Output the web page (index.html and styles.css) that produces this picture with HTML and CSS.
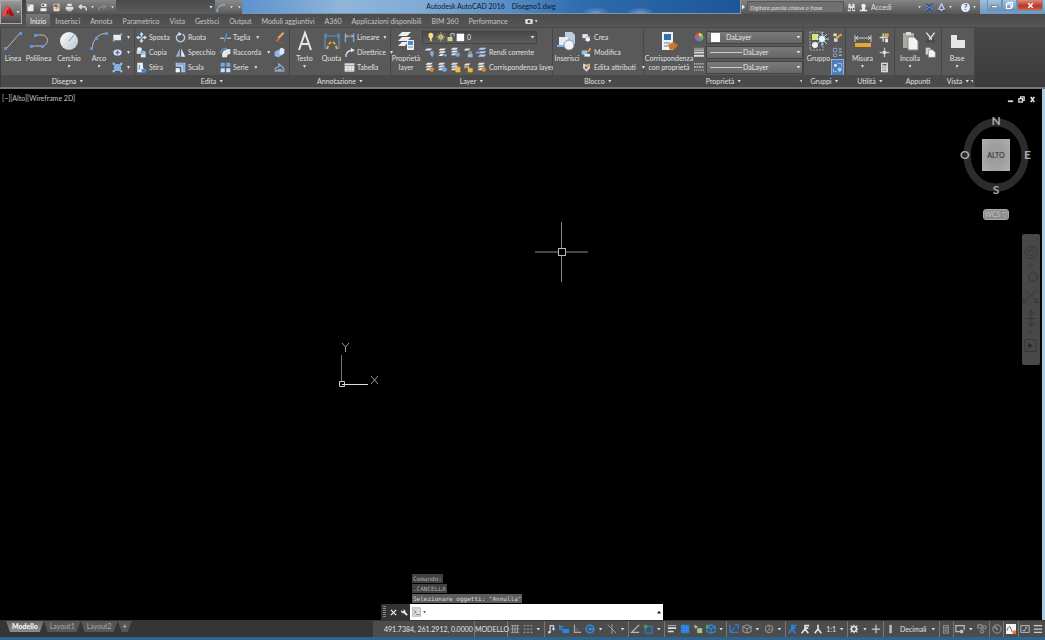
FILE: index.html
```html
<!DOCTYPE html>
<html lang="it">
<head>
<meta charset="utf-8">
<title>Autodesk AutoCAD 2016 - Disegno1.dwg</title>
<link rel="stylesheet" href="styles.css">
</head>
<body>
<svg class="defs" aria-hidden="true">
  <defs>
    <linearGradient id="ball" x1="0" y1="0" x2="1" y2="1"><stop offset="0" stop-color="#fff"/><stop offset="1" stop-color="#b9c3cf"/></linearGradient>
    <symbol id="i-rect" viewBox="0 0 16 16"><rect x="2" y="4" width="11" height="8" fill="#e8ebee"/><rect x="1" y="11" width="3" height="3" fill="#7fb1e8"/><rect x="12" y="2" width="3" height="3" fill="#7fb1e8"/></symbol>
    <symbol id="i-ellipse" viewBox="0 0 16 16"><ellipse cx="8" cy="8" rx="6" ry="4.500" fill="#dde4ee"/><path d="M8 5v6M5 8h6" stroke="#3e78c8" stroke-width="2"/></symbol>
    <symbol id="i-hatch" viewBox="0 0 16 16"><rect x="3" y="3" width="10" height="10" fill="#6ba3e0"/><path d="M3 9l6-6M4 13l9-9M9 13l4-4" stroke="#dcecff"/><path d="M1 1h3v3H1zM12 1h3v3h-3zM1 12h3v3H1zM12 12h3v3h-3z" fill="#aacdf4"/></symbol>
    <symbol id="i-move" viewBox="0 0 16 16"><path d="M8 0l3 4H9v3h3V5l4 3-4 3V9H9v3h2l-3 4-3-4h2V9H4v2L0 8l4-3v2h3V4H5z" fill="#d5e6f8"/><path d="M6 6h4v4H6z" fill="#6c9dd4"/></symbol>
    <symbol id="i-rotate" viewBox="0 0 16 16"><path d="M5 3a6 6 0 1 0 6 0" fill="none" stroke="#b5cbe4" stroke-width="2"/><path d="M5 0v6l5-3z" fill="#dbe9f9"/></symbol>
    <symbol id="i-copy" viewBox="0 0 16 16"><circle cx="5" cy="4" r="3.500" fill="#f1f3f5"/><path d="M1 5h6v5H1z" fill="#cfd9e4"/><circle cx="11" cy="9" r="3.500" fill="#8cc4ed"/><path d="M7 11h7v4H7z" fill="#d9ebfa"/></symbol>
    <symbol id="i-mirror" viewBox="0 0 16 16"><path d="M7 2v12H1z" fill="#8dafd7"/><path d="M9 2v12h6z" fill="#e6eaf0"/></symbol>
    <symbol id="i-stretch" viewBox="0 0 16 16"><path d="M2 1h8v6l3 8H2z" fill="#f1f4f7"/><path d="M8 10h7v5H8z" fill="#3f8be0"/><path d="M5 4v7" stroke="#69a3df" stroke-width="2"/></symbol>
    <symbol id="i-scale" viewBox="0 0 16 16"><path d="M1 1h14v14H9V7H1z" fill="#a9c7e9"/><path d="M1 9h6v6H1z" fill="#f2f6fa"/><path d="M3 3h10v10" stroke="#4f80bd" fill="none"/></symbol>
    <symbol id="i-trim" viewBox="0 0 16 16"><path d="M0 9h6m4 0h6" stroke="#a8b5c5" stroke-width="2"/><path d="M6 14L10 2" stroke="#5c99dc" stroke-width="2"/></symbol>
    <symbol id="i-fillet" viewBox="0 0 16 16"><path d="M3 15V10q1-7 12-7v7q-5 0-5 5z" fill="#e3e8ee"/><path d="M1 9q1-7 9-7" stroke="#5795da" stroke-width="2" fill="none"/></symbol>
    <symbol id="i-array" viewBox="0 0 16 16"><path d="M1 1h6v6H1zM9 1h6v6H9z" fill="#6fa9e5"/><path d="M1 9h6v6H1zM9 9h6v6H9z" fill="#c9dff6"/></symbol>
    <symbol id="i-erase" viewBox="0 0 16 16"><path d="M14 1L6 9" stroke="#e3a95f" stroke-width="3"/><path d="M7 8l2 2-4 4-3-1z" fill="#d4604b"/><path d="M6 15h9" stroke="#8d5a3a"/></symbol>
    <symbol id="i-explode" viewBox="0 0 16 16"><path d="M1 7l5-3 4 3v6l-4 2-5-2z" fill="#8db8e9"/><path d="M8 3l3-2 4 2v6l-4 3-3-2z" fill="#dceafa"/></symbol>
    <symbol id="i-offset" viewBox="0 0 16 16"><path d="M2 13V9l5-2V3l7 6v4z" fill="none" stroke="#89a7cb" stroke-width="2"/><path d="M6 13V11h5" stroke="#d9e5f3" fill="none"/></symbol>
    <symbol id="i-linear" viewBox="0 0 16 16"><path d="M2 2v13M14 2v13" stroke="#7aa9df" stroke-width="2"/><path d="M3 6h10M5 4L3 6l2 2M11 4l2 2-2 2" stroke="#c6d4e4" fill="none"/></symbol>
    <symbol id="i-leader" viewBox="0 0 16 16"><path d="M3 14q0-9 8-9h4" stroke="#dce1e7" stroke-width="2" fill="none"/><path d="M10 1l4 3-4 4z" fill="#f1f1f1"/><path d="M1 11h4l-2 4z" fill="#86b6ea"/></symbol>
    <symbol id="i-table" viewBox="0 0 16 16"><rect x="1" y="2" width="14" height="12" fill="#f2f2f2"/><path d="M1 5h14" stroke="#87a3c0" stroke-width="2"/><path d="M1 9h14M1 12h14M6 5v9M11 5v9" stroke="#bbb"/></symbol>
    <symbol id="i-layer" viewBox="0 0 16 16"><path d="M5 2h8l-3 3H2zM5 6h8l-3 3H2zM5 10h5l-2 3H2z" fill="#e5e8ec"/><circle cx="12" cy="12" r="2" fill="#74a9e4"/></symbol>
    <symbol id="i-layer-b" viewBox="0 0 16 16"><path d="M4 1h8L9 4H1zM4 5h8L9 8H1zM4 9h6l-2 3H1z" fill="#dfe4e9"/><circle cx="11" cy="11" r="3.500" fill="#6ca8ea"/></symbol>
    <symbol id="i-layer-a" viewBox="0 0 16 16"><path d="M4 2h8L9 5H1z" fill="#e3e6ea"/><path d="M9 6h5v5l-2 4-3-4z" fill="#7fb0e5"/></symbol>
    <symbol id="i-layer-c" viewBox="0 0 16 16"><path d="M4 2h7L8 5H1z" fill="#e3e6ea"/><path d="M7 10h7v5H7z" fill="#8fb8e3"/><path d="M9 10V7h3v3" stroke="#ddd" fill="none"/></symbol>
    <symbol id="i-layer-m" viewBox="0 0 16 16"><path d="M6 1h9l-3 3H3zM6 6h9l-3 3H3zM6 11h9l-3 3H3z" fill="#b7c9f0"/><path d="M0 8h6" stroke="#6f9be6" stroke-width="3"/></symbol>
    <symbol id="i-layer-y" viewBox="0 0 16 16"><path d="M4 1h8L9 4H1zM4 5h8L9 8H1zM4 9h6l-2 3H1z" fill="#dfe4e9"/><path d="M8 7h7v8H8z" fill="#efc044"/></symbol>
    <symbol id="i-layer-u" viewBox="0 0 16 16"><path d="M4 2h7L8 5H1z" fill="#e3e6ea"/><path d="M7 9h7v6H7z" fill="#f0b93c"/><path d="M3 9V7h5v3" stroke="#e7c368" stroke-width="2" fill="none"/></symbol>
    <symbol id="i-layer-r" viewBox="0 0 16 16"><path d="M5 1h8l-3 3H2zM5 5h8l-3 3H2zM5 9h8l-3 3H2z" fill="#e8e8e8"/><path d="M7 12l5-5 3 4-3 4z" fill="#e08a37"/></symbol>
    <symbol id="i-block" viewBox="0 0 16 16"><path d="M2 3h8v6H2z" fill="#e1e5ea"/><path d="M8 5l5 2v6H6z" fill="#a4c3e5"/><circle cx="10" cy="11" r="3" fill="#f4f5f6"/></symbol>
    <symbol id="i-block-e" viewBox="0 0 16 16"><path d="M1 5h8v6H1z" fill="#8cc7ec"/><path d="M5 10h8v4H5z" fill="#e7edf2"/><path d="M9 6l4-5 2 2-4 5z" fill="#eba34a"/></symbol>
    <symbol id="i-attr" viewBox="0 0 16 16"><path d="M3 2l5 2 5-2v7l-5 5-5-5z" fill="#e0d6c2"/><path d="M5 9l6-6 2 2-6 6z" fill="#e49b38"/><path d="M6 6h3v4H6z" fill="#647b94"/></symbol>
    <symbol id="i-wheel" viewBox="0 0 16 16"><path d="M8 8V1a7 7 0 0 1 6 4z" fill="#f1cd45"/><path d="M8 8l6-3a7 7 0 0 1-1 8z" fill="#7cb955"/><path d="M8 8l5 5a7 7 0 0 1-9 0z" fill="#5788cf"/><path d="M8 8l-4 5A7 7 0 0 1 2 5z" fill="#b25abd"/><path d="M8 8L2 5a7 7 0 0 1 6-4z" fill="#de5a48"/></symbol>
    <symbol id="i-weight" viewBox="0 0 16 16"><path d="M0 2h16" stroke="#ccc"/><path d="M0 5h16" stroke="#ccc" stroke-width="2"/><path d="M0 9h16M0 14h16" stroke="#ddd" stroke-width="3"/></symbol>
    <symbol id="i-ltype" viewBox="0 0 16 16"><path d="M0 3h16" stroke="#ccc" stroke-width="2" stroke-dasharray="2 1"/><path d="M0 8h16" stroke="#aaa" stroke-width="3" stroke-dasharray="3 1"/><path d="M0 13h16" stroke="#ccc" stroke-width="3" stroke-dasharray="1 2"/></symbol>
    <symbol id="i-gedit" viewBox="0 0 16 16"><path d="M2 2h5v4H2zM3 9h5v5H3z" fill="#dfdcc9"/><path d="M5 8l8-6 2 2-8 7z" fill="#e7a43b"/></symbol>
    <symbol id="i-gsel" viewBox="0 0 16 16"><path d="M2 2h5v5H2zM2 10h5v4H2z" fill="none" stroke="#9fb9d6"/><path d="M10 3h4M10 7h4M10 12h4" stroke="#8fb8e6" stroke-width="2"/></symbol>
    <symbol id="i-gon" viewBox="0 0 16 16"><path d="M3 3h4v4H3z" fill="#cde2f8"/><circle cx="11" cy="11" r="3" fill="#a8cef5"/><path d="M8 2h6v5M2 9v5h5" stroke="#b9d7f6" fill="none"/></symbol>
    <symbol id="i-qsel" viewBox="0 0 16 16"><path d="M6 2v12M1 8h12" stroke="#d6d6d6" stroke-width="2"/><path d="M8 2h6v5H8z" fill="#e7a446"/><path d="M9 10h4v5H9z" fill="#efefef"/></symbol>
    <symbol id="i-point" viewBox="0 0 16 16"><path d="M8 1v14M1 8h14" stroke="#bdbdbd" stroke-width="2"/><circle cx="8" cy="8" r="2.500" fill="#e6e6e6"/></symbol>
    <symbol id="i-calc" viewBox="0 0 16 16"><rect x="3" y="1" width="10" height="14" fill="#ddd"/><path d="M5 3h6v2H5z" fill="#555"/><path d="M5 8h6M5 12h6" stroke="#666" stroke-width="2" stroke-dasharray="1 1"/></symbol>
    <symbol id="i-cut" viewBox="0 0 16 16"><path d="M2 1l8 10M14 1L6 11" stroke="#e8e8e8" stroke-width="2"/><circle cx="4" cy="13" r="2" fill="none" stroke="#333"/><circle cx="12" cy="13" r="2" fill="none" stroke="#333"/></symbol>
    <symbol id="i-pages" viewBox="0 0 16 16"><path d="M1 1h7v10H1z" fill="#d4d4d4"/><path d="M5 4h6l4 4v7H5z" fill="#f4f4f4" stroke="#888"/></symbol>

    <symbol id="s-grid" viewBox="0 0 12 12"><path d="M1 2h10M1 6h10M1 10h10M3 1v10M6 1v10M9 1v10" stroke="#aaa"/></symbol>
    <symbol id="s-dots" viewBox="0 0 12 12"><path d="M1 2h10M1 6h10M1 10h10" stroke="#999" stroke-width="1.500" stroke-dasharray="2 2"/></symbol>
    <symbol id="s-infer" viewBox="0 0 12 12"><path d="M5 10V2h4v3" stroke="#ccc" stroke-width="1.500" fill="none"/><circle cx="4" cy="10" r="1.500" fill="#ddd"/><circle cx="9" cy="6" r="1.500" fill="#ddd"/></symbol>
    <symbol id="s-dyn" viewBox="0 0 12 12"><path d="M1 1v5h3M2 3h3" stroke="#2f8eed" stroke-width="1.500" fill="none"/><rect x="4" y="6" width="8" height="5" fill="#2387ed"/></symbol>
    <symbol id="s-ortho" viewBox="0 0 12 12"><path d="M3 1v9h8" stroke="#aaa" stroke-width="1.500" fill="none"/><path d="M3 6h4v4" stroke="#777" fill="none"/></symbol>
    <symbol id="s-polar" viewBox="0 0 12 12"><circle cx="6" cy="6" r="4.500" stroke="#2e88e4" stroke-width="2" fill="none"/><circle cx="6" cy="6" r="2" fill="#2e88e4"/><path d="M6 6h5" stroke="#55a5f2"/></symbol>
    <symbol id="s-iso" viewBox="0 0 12 12"><path d="M1 1l10 10M6 0v12" stroke="#aaa" fill="none"/></symbol>
    <symbol id="s-track" viewBox="0 0 12 12"><path d="M11 1L2 10h9" stroke="#bbb" stroke-width="1.500" fill="none"/></symbol>
    <symbol id="s-osnap" viewBox="0 0 12 12"><rect x="3" y="3" width="8" height="8" stroke="#247ddc" stroke-width="1.500" fill="none"/><rect x="1" y="1" width="4" height="4" fill="#4d9c4b"/></symbol>
    <symbol id="s-lines" viewBox="0 0 12 12"><path d="M1 2h10" stroke="#ccc"/><path d="M1 5h10M1 9h7" stroke="#ddd" stroke-width="2"/></symbol>
    <symbol id="s-trans" viewBox="0 0 12 12"><rect x="1" y="1" width="10" height="10" fill="#287fdd"/><path d="M1 4h10M1 8h10M4 1v10M8 1v10" stroke="#3a8ce2"/></symbol>
    <symbol id="s-cycle" viewBox="0 0 12 12"><rect x="5" y="5" width="6" height="6" fill="#a9c47c"/><path d="M1 1l5 2-3 3z" fill="#bbb"/></symbol>
    <symbol id="s-cube" viewBox="0 0 12 12"><path d="M1 3l5-2 5 2v6l-5 2-5-2zM1 3l5 3 5-3M6 6v5" stroke="#aaa" fill="none"/></symbol>
    <symbol id="s-bcube" viewBox="0 0 12 12"><path d="M1 3l5-2 5 2v6l-5 2-5-2zM1 3l5 3 5-3M6 6v5" stroke="#2789e8" stroke-width="1.500" fill="none"/><rect x="0" y="1" width="4" height="4" fill="#4ba067"/></symbol>
    <symbol id="s-ucs" viewBox="0 0 12 12"><path d="M1 1v9h10M1 10l6-6M7 1h4v5" stroke="#2780db" stroke-width="1.500" fill="none"/></symbol>
    <symbol id="s-gizmo" viewBox="0 0 12 12"><circle cx="6" cy="6" r="4.500" stroke="#aaa" fill="none"/><path d="M6 2v5h4" stroke="#ca7a58" fill="none"/><path d="M6 7l-3 2" stroke="#7bab71"/></symbol>
    <symbol id="s-man" viewBox="0 0 12 12"><path d="M6 1v5L2 11M6 6l4 5" stroke="currentColor" stroke-width="2" fill="none"/></symbol>
    <symbol id="s-man-x" viewBox="0 0 12 12"><path d="M6 1v5L2 11M6 6l4 5M7 2h4M6 5h4" stroke="currentColor" stroke-width="2" fill="none"/></symbol>
    <symbol id="s-gear" viewBox="0 0 12 12"><circle cx="6" cy="6" r="3" stroke="#ddd" stroke-width="2" fill="none"/><path d="M6 1v2M6 9v2M1 6h2M9 6h2M2 2l2 2M8 8l2 2M2 10l2-2M8 4l2-2" stroke="#ddd" stroke-width="1.500"/></symbol>
    <symbol id="s-plus" viewBox="0 0 12 12"><path d="M6 1v10M1 6h10" stroke="#ccc" stroke-width="1.500"/></symbol>
    <symbol id="s-bar" viewBox="0 0 12 12"><rect x="4" y="1" width="3" height="10" fill="#bbb"/></symbol>
    <symbol id="s-prop" viewBox="0 0 12 12"><rect x="3" y="2" width="6" height="9" fill="none" stroke="#999"/><path d="M3 4h6M5 5v5M7 5v5" stroke="#999"/></symbol>
    <symbol id="s-mon" viewBox="0 0 12 12"><path d="M6 9H1V2h10v5" fill="none" stroke="#bbb" stroke-width="1.500"/><rect x="6" y="7" width="4" height="4" fill="#bbb"/></symbol>
    <symbol id="s-isol" viewBox="0 0 12 12"><path d="M1 1h5v4H1z" stroke="#aaa" fill="none"/><circle cx="9" cy="4" r="2" fill="none" stroke="#aaa"/><circle cx="6" cy="9" r="2" fill="none" stroke="#aaa"/></symbol>
    <symbol id="s-perf" viewBox="0 0 12 12"><circle cx="6" cy="6" r="5" stroke="#aaa" fill="none"/><path d="M3 3l4 4" stroke="#aaa" stroke-width="1.500"/></symbol>
    <symbol id="s-hw" viewBox="0 0 12 12"><rect width="12" height="12" fill="#f5f5f5"/><path d="M1 8q3-9 5-2t5 2" stroke="#555" fill="none"/><path d="M8 8h4v4H8z" fill="#e77b2e"/></symbol>
    <symbol id="s-full" viewBox="0 0 12 12"><rect x="1" y="2" width="10" height="8" stroke="#ccc" fill="none"/><path d="M3 8h3V6M9 4H7v2" stroke="#ccc" fill="none"/></symbol>
    <symbol id="s-menu" viewBox="0 0 12 12"><path d="M1 2h10M1 6h10M1 10h10" stroke="#ccc" stroke-width="1.500"/></symbol>
  </defs>
</svg>

<div class="app">
  <header class="top">
    <button class="logo" aria-label="Menu applicazione">
      <svg viewBox="0 0 24 24"><path d="M1 19L8 3h5l8 14-5 2-3-3H8l-2 3z" fill="#c81f26"/><path d="M8 3h5l-2 7-5 9H1z" fill="#ec4a45"/><path d="M10 8l2 5H9z" fill="#6b0d12"/><path d="M14 6l7 11-5 2-3-5z" fill="#9f141b"/></svg>
      <i class="caret"></i>
    </button>
    <div class="titlebar">
      <div class="quick">
        <button aria-label="Nuovo"><svg viewBox="0 0 12 12"><path d="M2 2h8v9H2z" fill="#eee"/><path d="M2 2h3v3H2z" fill="#aaa"/></svg></button>
        <button aria-label="Salva"><svg viewBox="0 0 12 12"><path d="M3 1h7v4H3zM2 7h8v4H2z" fill="#eee"/><path d="M4 2h3v2H4z" fill="#555"/></svg></button>
        <button aria-label="Salva con nome"><svg viewBox="0 0 12 12"><path d="M2 1h8v10H2z" fill="#ddd"/><path d="M4 7l5-5 2 2-5 5z" fill="#e69b3e"/><path d="M3 2h4v3H3z" fill="#555"/></svg></button>
        <button aria-label="Stampa"><svg viewBox="0 0 12 12"><path d="M3 1h6v3H3zM1 5h10v4H1z" fill="#e4e4e4"/><path d="M3 8h6v3H3z" fill="#aac8e5"/></svg></button>
        <button aria-label="Annulla"><svg viewBox="0 0 12 12"><path d="M3 5h5q3 0 3 5" stroke="#ddd" stroke-width="2" fill="none"/><path d="M0 5l5-4v8z" fill="#ddd"/></svg></button>
        <i class="caret"></i>
        <button aria-label="Ripeti"><svg viewBox="0 0 12 12"><path d="M9 5H4Q1 5 1 10" stroke="#888" stroke-width="2" fill="none"/><path d="M12 5L7 1v8z" fill="#888"/></svg></button>
        <i class="caret"></i>
      </div>
      <div class="workspace"><i class="caret"></i></div>
      <div class="quick-end">
        <svg viewBox="0 0 12 12"><path d="M1 11Q2 3 11 2" stroke="#ccc" fill="none"/><path d="M0 9h3v3H0zM9 1h3v3H9z" fill="#6da2df"/></svg>
        <i class="caret"></i><i class="caret"></i>
      </div>
      <h1 class="doc-title"><span>Autodesk AutoCAD 2016</span><span>Disegno1.dwg</span></h1>
      <div class="infocenter">
        <i class="play"></i>
        <input class="search" type="text" aria-label="Cerca" placeholder="Digitare parola chiave o frase">
        <svg class="ic" viewBox="0 0 12 12"><path d="M1 11L2 1h3v10zM7 11V1h3l1 10zM4 4h4v3H4z" fill="#ddd"/><path d="M2 8h2M8 8h2" stroke="#444" stroke-width="2"/></svg>
        <svg class="ic" viewBox="0 0 12 12"><circle cx="6" cy="4" r="3" fill="#eee"/><path d="M1 11h10v-2H8V6H4v3H1z" fill="#eee"/></svg>
        <button class="signin">Accedi <i class="caret"></i></button>
        <svg class="ic wide" viewBox="0 0 12 12"><path d="M0 1h4l2 3 2-3h4L9 6l3 5H8L6 8l-2 3H0l3-5z" fill="#284a93"/><path d="M1 2l4 4-4 4M11 2L7 6l4 4" stroke="#b9ccf1" fill="none"/></svg>
        <svg class="ic" viewBox="0 0 12 12"><path d="M6 1L2 9h8z" fill="none" stroke="#b9c9ed" stroke-width="2"/><path d="M0 9h4v2H0zM8 9h4v2H8z" fill="#324d8e"/></svg>
        <i class="caret"></i>
        <button class="help" aria-label="Guida">?</button>
        <i class="caret"></i>
      </div>
      <div class="window-buttons">
        <button aria-label="Riduci a icona"><svg viewBox="0 0 12 12"><path d="M2 6h8v3H2z" fill="#fff" stroke="#667"/></svg></button>
        <button aria-label="Ripristina"><svg viewBox="0 0 12 12"><path d="M2 4h6v6H2zM4 4V2h6v6H8" fill="none" stroke="#fff" stroke-width="1.500"/></svg></button>
        <button class="close" aria-label="Chiudi"><svg viewBox="0 0 12 12"><path d="M3 3l6 6M9 3l-6 6" stroke="#fff" stroke-width="2"/></svg></button>
      </div>
    </div>
    <nav class="tabs">
      <button class="on">Inizio</button><button>Inserisci</button><button>Annota</button><button>Parametrico</button><button>Vista</button><button>Gestisci</button><button>Output</button><button>Moduli aggiuntivi</button><button>A360</button><button>Applicazioni disponibili</button><button>BIM 360</button><button>Performance</button>
      <button class="tab-min" aria-label="Riduci a schede"><svg viewBox="0 0 12 8"><rect width="12" height="8" rx="2" fill="#ddd"/><rect x="4" y="2" width="4" height="4" fill="#444"/></svg><i class="caret"></i></button>
    </nav>
  </header>

  <div class="ribbon">
    <section class="panel disegna">
      <div class="body">
        <button class="big"><svg viewBox="0 0 20 20"><path d="M3 18L17 2" stroke="#b9b9b9"/><path d="M1 16h3v3H1zM16 1h3v3h-3z" fill="#5f96dc"/></svg><span>Linea</span></button>
        <button class="big"><svg viewBox="0 0 20 20"><path d="M2 15h11a5 5 0 0 0 0-11H6" stroke="#b9b9b9" fill="none"/><path d="M1 14h3v3H1zM12 14h3v3h-3zM5 3h3v3H5z" fill="#5f96dc"/></svg><span>Polilinea</span></button>
        <button class="big"><svg viewBox="0 0 20 20"><circle cx="10" cy="10" r="9" fill="url(#ball)"/><path d="M10 10l5-6" stroke="#5d93d3"/></svg><span>Cerchio</span><i class="caret"></i></button>
        <button class="big"><svg viewBox="0 0 20 20"><path d="M3 18Q4 3 18 2" stroke="#b9b9b9" fill="none"/><path d="M1 16h3v3H1zM6 6h3v3H6zM16 1h3v3h-3z" fill="#5f96dc"/></svg><span>Arco</span><i class="caret"></i></button>
        <div class="col">
          <button class="row" aria-label="Rettangolo"><svg><use href="#i-rect"/></svg><i class="caret"></i></button>
          <button class="row" aria-label="Ellisse"><svg><use href="#i-ellipse"/></svg><i class="caret"></i></button>
          <button class="row" aria-label="Tratteggio"><svg><use href="#i-hatch"/></svg><i class="caret"></i></button>
        </div>
      </div>
      <footer>Disegna<i class="caret"></i></footer>
    </section>

    <section class="panel edita">
      <div class="body">
        <div class="col">
          <button class="row"><svg><use href="#i-move"/></svg>Sposta</button>
          <button class="row"><svg><use href="#i-copy"/></svg>Copia</button>
          <button class="row"><svg><use href="#i-stretch"/></svg>Stira</button>
        </div>
        <div class="col">
          <button class="row"><svg><use href="#i-rotate"/></svg>Ruota</button>
          <button class="row"><svg><use href="#i-mirror"/></svg>Specchio</button>
          <button class="row"><svg><use href="#i-scale"/></svg>Scala</button>
        </div>
        <div class="col">
          <button class="row"><svg><use href="#i-trim"/></svg>Taglia<i class="caret"></i></button>
          <button class="row"><svg><use href="#i-fillet"/></svg>Raccorda<i class="caret"></i></button>
          <button class="row"><svg><use href="#i-array"/></svg>Serie<i class="caret"></i></button>
        </div>
        <div class="col">
          <button class="row" aria-label="Cancella"><svg><use href="#i-erase"/></svg></button>
          <button class="row" aria-label="Esplodi"><svg><use href="#i-explode"/></svg></button>
          <button class="row" aria-label="Offset"><svg><use href="#i-offset"/></svg></button>
        </div>
      </div>
      <footer>Edita<i class="caret"></i></footer>
    </section>

    <section class="panel annotazione">
      <div class="body">
        <button class="big"><svg viewBox="0 0 20 20"><path d="M4 19L10 2l6 17M6 13h8" stroke="#e6e6e6" stroke-width="2" fill="none"/></svg><span>Testo</span><i class="caret"></i></button>
        <button class="big"><svg viewBox="0 0 20 20"><path d="M3 2v16M17 2v16" stroke="#6d9bd3"/><path d="M3 5h14M5 3L3 5l2 2M15 3l2 2-2 2" stroke="#5793dc" fill="none"/><path d="M5 18q2-7 5-7t5 7" stroke="#e4ae3c" stroke-width="2" stroke-dasharray="3 2" fill="none"/></svg><span>Quota</span></button>
        <div class="col">
          <button class="row"><svg><use href="#i-linear"/></svg>Lineare<i class="caret"></i></button>
          <button class="row"><svg><use href="#i-leader"/></svg>Direttrice<i class="caret"></i></button>
          <button class="row"><svg><use href="#i-table"/></svg>Tabella</button>
        </div>
      </div>
      <footer>Annotazione<i class="caret"></i></footer>
    </section>

    <section class="panel layer">
      <div class="body">
        <button class="big"><svg viewBox="0 0 20 20"><path d="M6 1h9l-4 4H2zM6 6h9l-4 4H2zM6 11h6l-3 4H2z" fill="#eceef0"/><path d="M11 9h7v10h-7z" fill="#eaf2fa"/><path d="M12 10h5v4h-5z" fill="#4c8bcf"/><path d="M12 16h5" stroke="#888"/></svg><span>Proprietà<br>layer</span></button>
        <div class="col">
          <label class="combo">
            <svg class="state" viewBox="0 0 48 14"><path d="M4 5a3 3 0 1 1 6 0q0 2-2 4v3H6V9Q4 7 4 5z" fill="#f2df86"/><circle cx="19" cy="7" r="3" fill="#f4dc87"/><path d="M19 1v12M13 7h12M15 3l8 8M23 3l-8 8" stroke="#b5a371"/><path d="M27 7h6v5h-6z" fill="#d9cf8c"/><path d="M31 7V3h4v3" stroke="#ddd" fill="none"/><path d="M38 3h9v9h-9z" fill="#fff"/></svg>
            <select aria-label="Layer"><option>0</option></select>
          </label>
          <div class="icons">
            <button class="row" aria-label="Disattiva"><svg><use href="#i-layer-a"/></svg></button>
            <button class="row" aria-label="Isola"><svg><use href="#i-layer"/></svg></button>
            <button class="row" aria-label="Congela"><svg><use href="#i-layer-b"/></svg></button>
            <button class="row" aria-label="Blocca"><svg><use href="#i-layer-c"/></svg></button>
            <button class="row"><svg><use href="#i-layer-m"/></svg>Rendi corrente</button>
          </div>
          <div class="icons">
            <button class="row" aria-label="Attiva tutti"><svg><use href="#i-layer-r"/></svg></button>
            <button class="row" aria-label="Annulla isolamento"><svg><use href="#i-layer-b"/></svg></button>
            <button class="row" aria-label="Scongela tutti"><svg><use href="#i-layer-y"/></svg></button>
            <button class="row" aria-label="Sblocca"><svg><use href="#i-layer-u"/></svg></button>
            <button class="row"><svg><use href="#i-layer-r"/></svg>Corrispondenza layer</button>
          </div>
        </div>
      </div>
      <footer>Layer<i class="caret"></i></footer>
    </section>

    <section class="panel blocco">
      <div class="body">
        <button class="big"><svg viewBox="0 0 20 20"><path d="M8 1h7l3 3v9H8z" fill="#b8cde4"/><path d="M2 6h9v8H2z" fill="#e8ecf0"/><circle cx="12" cy="14" r="5" fill="#f1f3f5" stroke="#8099b4"/><path d="M0 15h7" stroke="#77b0e9" stroke-width="2"/></svg><span>Inserisci</span></button>
        <div class="col">
          <button class="row"><svg><use href="#i-block"/></svg>Crea</button>
          <button class="row"><svg><use href="#i-block-e"/></svg>Modifica</button>
          <button class="row"><svg><use href="#i-attr"/></svg>Edita attributi<i class="caret"></i></button>
        </div>
      </div>
      <footer>Blocco<i class="caret"></i></footer>
    </section>

    <section class="panel proprieta">
      <div class="body">
        <button class="big"><svg viewBox="0 0 20 20"><path d="M3 1h11v18H3z" fill="#f0f3f6"/><path d="M5 3h7v6H5z" fill="#326fae"/><path d="M5 12h6M5 15h4" stroke="#67788a"/><path d="M9 14l5-3 5 3-3 4-5 1z" fill="#c9762e"/></svg><span>Corrispondenza<br>con proprietà</span></button>
        <div class="col">
          <label class="combo"><svg><use href="#i-wheel"/></svg><i class="swatch"></i><select aria-label="Colore"><option>DaLayer</option></select></label>
          <label class="combo line"><svg><use href="#i-weight"/></svg><i class="stroke"></i><select aria-label="Spessore linea"><option>DaLayer</option></select></label>
          <label class="combo line"><svg><use href="#i-ltype"/></svg><i class="stroke"></i><select aria-label="Tipo di linea"><option>DaLayer</option></select></label>
        </div>
      </div>
      <footer>Proprietà<i class="caret"></i><i class="launcher"></i></footer>
    </section>

    <section class="panel gruppi">
      <div class="body">
        <button class="big"><svg viewBox="0 0 20 20"><rect x="1" y="1" width="13" height="18" fill="none" stroke="#aaa" stroke-dasharray="2 1"/><path d="M3 3h6v6H3z" fill="#dfe36d"/><circle cx="6" cy="14" r="3" fill="#eef0f2"/><path d="M13 1v14M6 8h14M8 3l10 10M18 3L8 13" stroke="#b9e2ff"/><circle cx="13" cy="8" r="3" fill="#e7f7ff"/></svg><span>Gruppo</span></button>
        <div class="col">
          <button class="row" aria-label="Modifica gruppo"><svg><use href="#i-gedit"/></svg></button>
          <button class="row" aria-label="Gestione gruppi"><svg><use href="#i-gsel"/></svg></button>
          <button class="row pressed" aria-label="Selezione gruppi"><svg><use href="#i-gon"/></svg></button>
        </div>
      </div>
      <footer>Gruppi<i class="caret"></i></footer>
    </section>

    <section class="panel utilita">
      <div class="body">
        <button class="big"><svg viewBox="0 0 20 20"><path d="M2 4v7M18 4v7M2 7h16M5 5L3 7l2 2M15 5l2 2-2 2" stroke="#ccc" fill="none"/><path d="M2 12h16v4H2z" fill="#e9a52f"/></svg><span>Misura</span><i class="caret"></i></button>
        <div class="col">
          <button class="row" aria-label="Selezione rapida"><svg><use href="#i-qsel"/></svg></button>
          <button class="row" aria-label="Punto"><svg><use href="#i-point"/></svg></button>
          <button class="row" aria-label="Calcolatrice"><svg><use href="#i-calc"/></svg></button>
        </div>
      </div>
      <footer>Utilità<i class="caret"></i></footer>
    </section>

    <section class="panel appunti">
      <div class="body">
        <button class="big"><svg viewBox="0 0 20 20"><path d="M3 2h11v15H3z" fill="#a9a9a4"/><path d="M6 1h5v3H6z" fill="#ddd"/><path d="M8 6h6l4 4v9H8z" fill="#f3f3f1" stroke="#888"/></svg><span>Incolla</span><i class="caret"></i></button>
        <div class="col">
          <button class="row" aria-label="Taglia"><svg><use href="#i-cut"/></svg></button>
          <button class="row" aria-label="Copia"><svg><use href="#i-pages"/></svg></button>
        </div>
      </div>
      <footer>Appunti</footer>
    </section>

    <section class="panel vista">
      <div class="body">
        <button class="big"><svg viewBox="0 0 20 20"><path d="M4 4h6v5h8v8H4z" fill="#e6e6e6"/></svg><span>Base</span><i class="caret"></i></button>
      </div>
      <footer>Vista<i class="caret"></i><i class="launcher"></i></footer>
    </section>
  </div>

  <main class="canvas">
    <div class="view-label">[−][Alto][Wireframe 2D]</div>
    <div class="doc-buttons">
      <button aria-label="Riduci disegno"><svg viewBox="0 0 8 8"><path d="M1 6h6" stroke="#ddd" stroke-width="2"/></svg></button>
      <button aria-label="Ripristina disegno"><svg viewBox="0 0 8 8"><path d="M1 3h4v4H1zM3 3V1h4v4H5" stroke="#ddd" stroke-width="1.500" fill="none"/></svg></button>
      <button aria-label="Chiudi disegno"><svg viewBox="0 0 8 8"><path d="M2 1l4 6M6 1L2 7" stroke="#ddd" stroke-width="2"/></svg></button>
    </div>

    <svg class="crosshair" viewBox="0 0 53 60"><path d="M26.500 0v26M26.500 34v26M0 30h23M30 30h23" stroke="#8a8a8a"/><rect x="23.500" y="26.500" width="7" height="7" fill="none" stroke="#bbb"/></svg>
    <svg class="ucs" viewBox="0 0 44 48"><path d="M4.500 13v27" stroke="#777"/><path d="M5 42.500h26" stroke="#ddd"/><path d="M2.500 39.500h5v5h-5z" fill="none" stroke="#ccc"/><path d="M5 1l3.500 4L12 1M8.500 5v5M34 34l7 8M41 34l-7 8" stroke="#999" fill="none"/></svg>

    <div class="viewcube">
      <b class="n">N</b><b class="w">O</b><button class="face">ALTO</button><b class="e">E</b><b class="s">S</b>
    </div>
    <button class="wcs">WCS ▽</button>
    <div class="navbar">
      <svg viewBox="0 0 18 130"><g fill="none" stroke="#363636"><circle cx="9" cy="18" r="6"/><circle cx="9" cy="18" r="3"/><path d="M7 31h4M3 55l12 12M3 67l12-12M7 40l4-3 4 3v5l-4 2-4-2zM9 76v16M4 84h10M6 80l3-4 3 4M6 88l3 4 3-4M3 105h11v12H3zM2 64l-1 4h4M14 64l2 4h-4M7 97h4M14 3l2 2M14 126l2-2"/></g><path d="M6 108l5 3-5 3z" fill="#2c2c2c"/></svg>
    </div>

    <div class="command">
      <output>Comando:</output>
      <output>.CANCELLA</output>
      <output class="last">Selezionare oggetti: "Annulla"</output>
      <div class="prompt">
        <div class="grip">
          <i class="dots"></i>
          <button aria-label="Chiudi riga di comando"><svg viewBox="0 0 8 8"><path d="M1 1l6 6M7 1L1 7" stroke="#eee" stroke-width="1.500"/></svg></button>
          <button aria-label="Personalizza"><svg viewBox="0 0 8 8"><path d="M3 3l4 4" stroke="#eee" stroke-width="2"/><path d="M0 1v2l2 2 3-1V2L3 0v2L2 3z" fill="#eee"/></svg></button>
        </div>
        <svg class="cmd" viewBox="0 0 12 12"><rect x="0" y="1" width="10" height="10" fill="#ddd" stroke="#aaa"/><path d="M2 4l3 2-3 2M5 9h4" stroke="#777" fill="none"/></svg>
        <i class="caret"></i>
        <input type="text" aria-label="Riga di comando">
        <i class="caret up"></i>
      </div>
    </div>
  </main>

  <footer class="bottom">
    <nav class="layouts">
      <button class="on"><span>Modello</span></button><button><span>Layout1</span></button><button><span>Layout2</span></button><button class="add" aria-label="Nuovo layout"><span>+</span></button>
    </nav>
    <div class="status">
      <div class="grp coords">491.7384, 261.2912, 0.0000</div>
      <div class="grp"><button class="word">MODELLO</button></div>
      <div class="grp"><button aria-label="Griglia"><svg><use href="#s-grid"/></svg></button><button aria-label="Snap"><svg><use href="#s-dots"/></svg></button><i class="caret"></i></div>
      <div class="grp"><button aria-label="Inferisci vincoli"><svg><use href="#s-infer"/></svg></button><button aria-label="Input dinamico"><svg><use href="#s-dyn"/></svg></button><button aria-label="Orto"><svg><use href="#s-ortho"/></svg></button><button aria-label="Polare"><svg><use href="#s-polar"/></svg></button><i class="caret"></i><button aria-label="Isometrico"><svg><use href="#s-iso"/></svg></button><i class="caret"></i></div>
      <div class="grp"><button aria-label="Puntamento"><svg><use href="#s-track"/></svg></button><button aria-label="Snap oggetto"><svg><use href="#s-osnap"/></svg></button><i class="caret"></i></div>
      <div class="grp"><button aria-label="Spessore"><svg><use href="#s-lines"/></svg></button><button aria-label="Trasparenza"><svg><use href="#s-trans"/></svg></button><button aria-label="Selezione ciclica"><svg><use href="#s-cycle"/></svg></button><button aria-label="Snap 3D"><svg><use href="#s-bcube"/></svg></button><i class="caret"></i></div>
      <div class="grp"><button aria-label="UCS dinamico"><svg><use href="#s-ucs"/></svg></button><button aria-label="Filtro selezione"><svg><use href="#s-cube"/></svg></button><i class="caret"></i><button aria-label="Gizmo"><svg><use href="#s-gizmo"/></svg></button><i class="caret"></i></div>
      <div class="grp"><button class="blue" aria-label="Visibilità annotazioni"><svg><use href="#s-man-x"/></svg></button><button aria-label="Scala automatica"><svg><use href="#s-man-x"/></svg></button><button aria-label="Scala annotazione"><svg><use href="#s-man"/></svg></button><button>1:1</button><i class="caret"></i></div>
      <div class="grp"><button aria-label="Area di lavoro"><svg><use href="#s-gear"/></svg></button><i class="caret"></i><button aria-label="Monitor annotazioni"><svg><use href="#s-plus"/></svg></button></div>
      <div class="grp"><button aria-label="Unità"><svg><use href="#s-bar"/></svg></button><button class="word">Decimali</button><i class="caret"></i></div>
      <div class="grp"><button aria-label="Proprietà rapide"><svg><use href="#s-prop"/></svg></button></div>
      <div class="grp"><button aria-label="Blocca interfaccia"><svg><use href="#s-mon"/></svg></button><i class="caret"></i><button aria-label="Isola oggetti"><svg><use href="#s-isol"/></svg></button></div>
      <div class="grp"><button aria-label="Prestazioni"><svg><use href="#s-perf"/></svg></button></div>
      <div class="grp"><button aria-label="Accelerazione hardware"><svg><use href="#s-hw"/></svg></button></div>
      <div class="grp"><button aria-label="Schermo intero"><svg><use href="#s-full"/></svg></button><button aria-label="Personalizzazione"><svg><use href="#s-menu"/></svg></button></div>
    </div>
  </footer>
</div>
</body>
</html>
```
FILE: styles.css
```css
* { box-sizing: border-box; }

body {
  margin: 0;
  background: #000;
  color: #e0e0e0;
  font: 7px/9px Lato, "Liberation Sans", sans-serif;
}

button, input, select {
  margin: 0;
  padding: 0;
  border: 0;
  background: none;
  color: inherit;
  font: inherit;
  white-space: nowrap;
}

svg { display: block; flex: none; }
.defs { position: absolute; width: 0; height: 0; }

.app {
  display: flex;
  flex-direction: column;
  height: 100vh;
  overflow: hidden;
}

.caret {
  flex: none;
  width: 4px;
  height: 3px;
  background: #ddd;
  clip-path: polygon(0 0, 100% 0, 50% 100%);
}
.caret.up { background: #222; clip-path: polygon(50% 0, 100% 100%, 0 100%); }

/* Title bar and ribbon tabs */
.top {
  display: grid;
  grid-template-columns: 26px 1fr;
  grid-template-rows: 14px 13px;
  background: linear-gradient(#414141, #555);
}
.logo {
  grid-row: 1 / 3;
  display: flex;
  align-items: center;
  width: 22px;
  height: 24px;
  border: 1px solid #aaa;
  background: linear-gradient(#999, #4c4c4c);
}
.logo svg { width: 15px; height: 20px; }
.titlebar {
  display: flex;
  background: linear-gradient(#777, #4e4e4e);
}
.quick {
  display: flex;
  align-items: center;
  gap: 4px;
  width: 90px;
  background: linear-gradient(#858585, #555);
}
.quick svg { width: 9px; height: 9px; }
.quick .caret { width: 3px; }
.workspace {
  display: flex;
  align-items: center;
  justify-content: flex-end;
  width: 99px;
  padding-right: 2px;
  background: linear-gradient(#4a4a4a, #5e5e5e);
}
.quick-end {
  display: flex;
  align-items: center;
  gap: 5px;
  width: 27px;
  padding-left: 1px;
  background: linear-gradient(#8b8b8b, #5b5b5b);
}
.quick-end svg { width: 9px; height: 9px; }
.quick-end .caret { width: 3px; }
.doc-title {
  display: flex;
  flex: 1;
  justify-content: center;
  align-items: center;
  gap: 7px;
  margin: 0;
  border-bottom: 1px solid #7b96b0;
  background:
    radial-gradient(ellipse 14px 6px at 80% 100%, #7896c4, transparent),
    radial-gradient(ellipse 14px 6px at 71% 100%, #7896c4, transparent),
    linear-gradient(90deg, #5c93cf, #7ba6d2 12%, #8fb6da 20%, #7fabd5 36%, #5c8fc6 52%, #2e6cae 68%, #1d5696);
  color: #0c1b2e;
  font-size: 7px;
  font-weight: 400;
}
.infocenter {
  display: flex;
  align-items: center;
  width: 240px;
  border-left: 1px solid #999;
  background: linear-gradient(#858585, #555);
}
.play {
  width: 3px;
  height: 5px;
  margin: 0 2px 0 1px;
  background: #eee;
  clip-path: polygon(0 0, 100% 50%, 0 100%);
}
.search {
  width: 97px;
  height: 12px;
  margin-right: 3px;
  padding: 0 2px;
  border: 1px solid #555;
  background: #707070;
  font-size: 6px;
  font-style: italic;
}
.search::placeholder { color: #ddd; opacity: 1; }
.ic { width: 9px; height: 9px; margin-right: 3px; }
.signin {
  display: flex;
  align-items: center;
  justify-content: space-between;
  width: 50px;
  margin-right: 4px;
}
.infocenter .caret { width: 3px; }
.help {
  width: 9px;
  height: 9px;
  margin: 0 3px 0 9px;
  border-radius: 50%;
  background: #e4edf7;
  color: #254f8c;
  font-weight: 700;
}
.window-buttons {
  display: flex;
  align-items: flex-start;
  width: 65px;
  padding-left: 7px;
  background: linear-gradient(#9fc0df, #6b96c2);
}
.window-buttons button {
  display: grid;
  place-items: center;
  width: 15px;
  height: 11px;
  border: 1px solid #6f92b3;
  border-top: 0;
  background: linear-gradient(#a9c5de, #6c96bd);
}
.window-buttons .close { width: 26px; background: linear-gradient(#d98b7e, #bd3420 60%, #d0624b); }
.window-buttons svg { width: 9px; height: 9px; }

.tabs { display: flex; align-items: stretch; }
.tabs button { padding: 1px 5px 0; color: #c6c6c6; }
.tabs .on { padding: 1px 4px 0; background: linear-gradient(#777, #5f5f5f); color: #eee; }
.tabs .tab-min { display: flex; align-items: center; gap: 2px; padding-left: 12px; }
.tab-min svg { width: 8px; height: 5px; }
.tab-min .caret { width: 3px; }

/* Ribbon */
.ribbon {
  display: flex;
  height: 62px;
  padding-left: 1px;
  border-top: 1px solid #4a4a4a;
  border-bottom: 2px solid #777;
  background: linear-gradient(#484848, #3a3a3a);
}
.panel {
  display: flex;
  flex: none;
  flex-direction: column;
  border-right: 1px solid #474747;
  background: #595959;
}
.body { display: flex; flex: 1; padding-top: 2px; }
.panel footer {
  position: relative;
  display: flex;
  align-items: center;
  justify-content: center;
  gap: 3px;
  height: 12px;
  background: #4a4a4a;
}
.launcher {
  position: absolute;
  right: 1px;
  width: 3px;
  height: 3px;
  background: #ccc;
  clip-path: polygon(0 0, 100% 0, 100% 100%);
}
.disegna { width: 134px; }
.edita { width: 155px; }
.annotazione { width: 101px; }
.layer { width: 162px; }
.blocco { width: 91px; }
.proprieta { width: 160px; }
.gruppi { width: 42px; }
.utilita { width: 49px; }
.appunti { width: 47px; }
.vista { width: 33px; }

.big {
  display: flex;
  flex-direction: column;
  align-items: center;
  flex: none;
  width: 26px;
}
.big svg { width: 20px; height: 22px; margin-bottom: 2px; }
.big .caret { margin-top: 2px; width: 3px; }
.disegna .big { width: 24px; }
.disegna .big:nth-child(2) { width: 27px; }
.disegna .big:nth-child(3) { width: 34px; }
.disegna .big:nth-child(4) { width: 26px; }
.annotazione .big { width: 25px; }
.annotazione .big:first-child { width: 29px; }
.layer .big { width: 30px; }
.blocco .big { width: 28px; }
.proprieta .big { width: 50px; }
.utilita .big { width: 33px; }
.appunti .big, .vista .big { width: 30px; }

.col { display: flex; flex-direction: column; }
.row {
  display: flex;
  align-items: center;
  gap: 2px;
  height: 15px;
}
.row svg { width: 11px; height: 11px; }
.row .caret { width: 3px; margin-left: 4px; }
.disegna .row .caret { margin-left: 2px; }
.edita .body { padding-left: 1px; }
.edita .col:nth-child(1) { width: 39px; }
.edita .col:nth-child(2) { width: 45px; }
.edita .col:nth-child(3) { width: 54px; }
.gruppi .body { padding-left: 1px; }
.annotazione .row .caret { margin-left: 2px; }
.icons { display: flex; gap: 2px; }
.layer .icons { padding-left: 3px; }
.gruppi .big { width: 27px; }
.pressed { background: #4d7db8; outline: 1px solid #86aede; }

.combo {
  display: flex;
  align-items: center;
  position: relative;
  height: 14px;
  margin-bottom: 1px;
}
.combo::after {
  content: "";
  position: absolute;
  right: 2px;
  width: 5px;
  height: 3px;
  background: #ddd;
  clip-path: polygon(0 0, 100% 0, 50% 100%);
}
.combo select {
  appearance: none;
  flex: 1;
  height: 13px;
  border: 1px solid #444;
  background: linear-gradient(#7a7a7a, #666);
  color: #e6e6e6;
}
.layer .combo { width: 115px; margin-left: 1px; }
.layer select { padding-left: 44px; background: linear-gradient(#484848, #5d5d5d); }
.state { position: absolute; left: 3px; width: 40px; height: 12px; }
.proprieta .combo { width: 109px; }
.proprieta .combo > svg { width: 10px; height: 10px; margin-right: 2px; }
.proprieta select { padding-left: 19px; }
.proprieta .line select { padding-left: 36px; }
.swatch { position: absolute; left: 17px; width: 9px; height: 9px; background: #fff; }
.stroke { position: absolute; left: 16px; width: 32px; height: 1px; background: #ccc; }

/* Drawing area */
.canvas {
  position: relative;
  flex: 1;
  overflow: hidden;
  border-right: 3px solid #a9cce4;
  background: #000;
}
.view-label { padding: 5px 2px; color: #c4c4c4; }
.doc-buttons { position: absolute; top: 7px; right: 6px; display: flex; gap: 4px; }
.doc-buttons svg { width: 7px; height: 7px; }
.crosshair { position: absolute; left: 535px; top: 133px; width: 53px; height: 60px; }
.ucs { position: absolute; left: 337px; top: 253px; width: 44px; height: 48px; }

.viewcube {
  position: absolute;
  top: 29px;
  right: 13px;
  display: grid;
  grid-template: 1fr 30px 1fr / 1fr 30px 1fr;
  place-items: center;
  width: 66px;
  height: 74px;
  border-radius: 50%;
  background: radial-gradient(closest-side, transparent 76%, #2c2c2c 78%, #2c2c2c 98%, transparent);
  color: #aaa;
  font-size: 12px;
  line-height: 12px;
}
.viewcube .n { grid-area: 1 / 2; align-self: start; margin-top: -3px; }
.viewcube .w { grid-area: 2 / 1; justify-self: start; margin-left: -3px; }
.viewcube .e { grid-area: 2 / 3; justify-self: end; margin-right: -2px; }
.viewcube .s { grid-area: 3 / 2; align-self: end; margin-bottom: -4px; }
.face {
  grid-area: 2 / 2;
  width: 28px;
  height: 32px;
  background: radial-gradient(#9d9d9d 40%, #b0b0b0);
  color: #444;
  font-size: 7px;
  font-weight: 700;
}
.wcs {
  position: absolute;
  top: 120px;
  right: 33px;
  width: 26px;
  height: 11px;
  border: 1px solid #aaa;
  border-radius: 3px;
  background: #8c8c8c;
  color: #c0c0c0;
}
.navbar {
  position: absolute;
  top: 145px;
  right: 2px;
  width: 18px;
  border-radius: 2px;
  background: #484848;
}
.navbar svg { width: 18px; height: 131px; }

.command {
  position: absolute;
  left: 381px;
  bottom: 0;
  display: flex;
  flex-direction: column;
  align-items: flex-start;
  gap: 1px;
  width: 282px;
}
.command output {
  margin-left: 31px;
  padding: 0 1px;
  background: #414141;
  color: #b0b0b0;
  font: 6px/9px "DejaVu Sans Mono", monospace;
}
.command .last { background: #5b5b5b; color: #ddd; }
.prompt {
  display: flex;
  align-items: center;
  align-self: stretch;
  height: 16px;
  padding-right: 2px;
  background: #fff;
}
.grip {
  display: flex;
  align-items: center;
  gap: 4px;
  align-self: stretch;
  width: 29px;
  margin-right: 2px;
  padding-left: 2px;
  background: #333;
}
.dots { flex: none; width: 3px; height: 12px; background: repeating-linear-gradient(#888 0 1px, #333 1px 2px); }
.grip svg { width: 7px; height: 7px; }
.cmd { width: 10px; height: 10px; margin-right: 1px; }
.prompt .caret { width: 3px; background: #555; }
.prompt .up { width: 4px; background: #222; }
.prompt input { flex: 1; min-width: 0; color: #111; }

/* Layout tabs and status bar */
.bottom {
  display: flex;
  justify-content: space-between;
  height: 20px;
  padding-top: 1px;
  border-bottom: 3px solid #2b6592;
  background: #353535;
}
.layouts { display: flex; align-items: flex-start; padding-left: 6px; }
.layouts button {
  height: 11px;
  padding: 0 6px;
  background: #565656;
  clip-path: polygon(0 0, 100% 0, calc(100% - 4px) 100%, 4px 100%);
  color: #aaa;
}
.layouts .on { background: linear-gradient(#666, #8c8c8c); color: #fff; font-weight: 700; }
.layouts .add { padding: 0 5px; color: #ddd; }

.status {
  display: flex;
  width: 672px;
  background: #4c4c4c;
  color: #e2e2e2;
}
.grp {
  display: flex;
  flex: 1 0 auto;
  align-items: center;
  border-right: 1px solid #777;
}
.grp:last-child { border-right: 0; }
.grp button { display: grid; place-items: center; width: 13px; height: 14px; }
.grp svg { width: 10px; height: 10px; }
.grp .caret { margin: 0 3px 0 2px; }
.grp .word { width: 32px; }
.grp .blue { color: #2788ec; }
.coords { flex: none; width: 102px; padding-left: 11px; }
```
